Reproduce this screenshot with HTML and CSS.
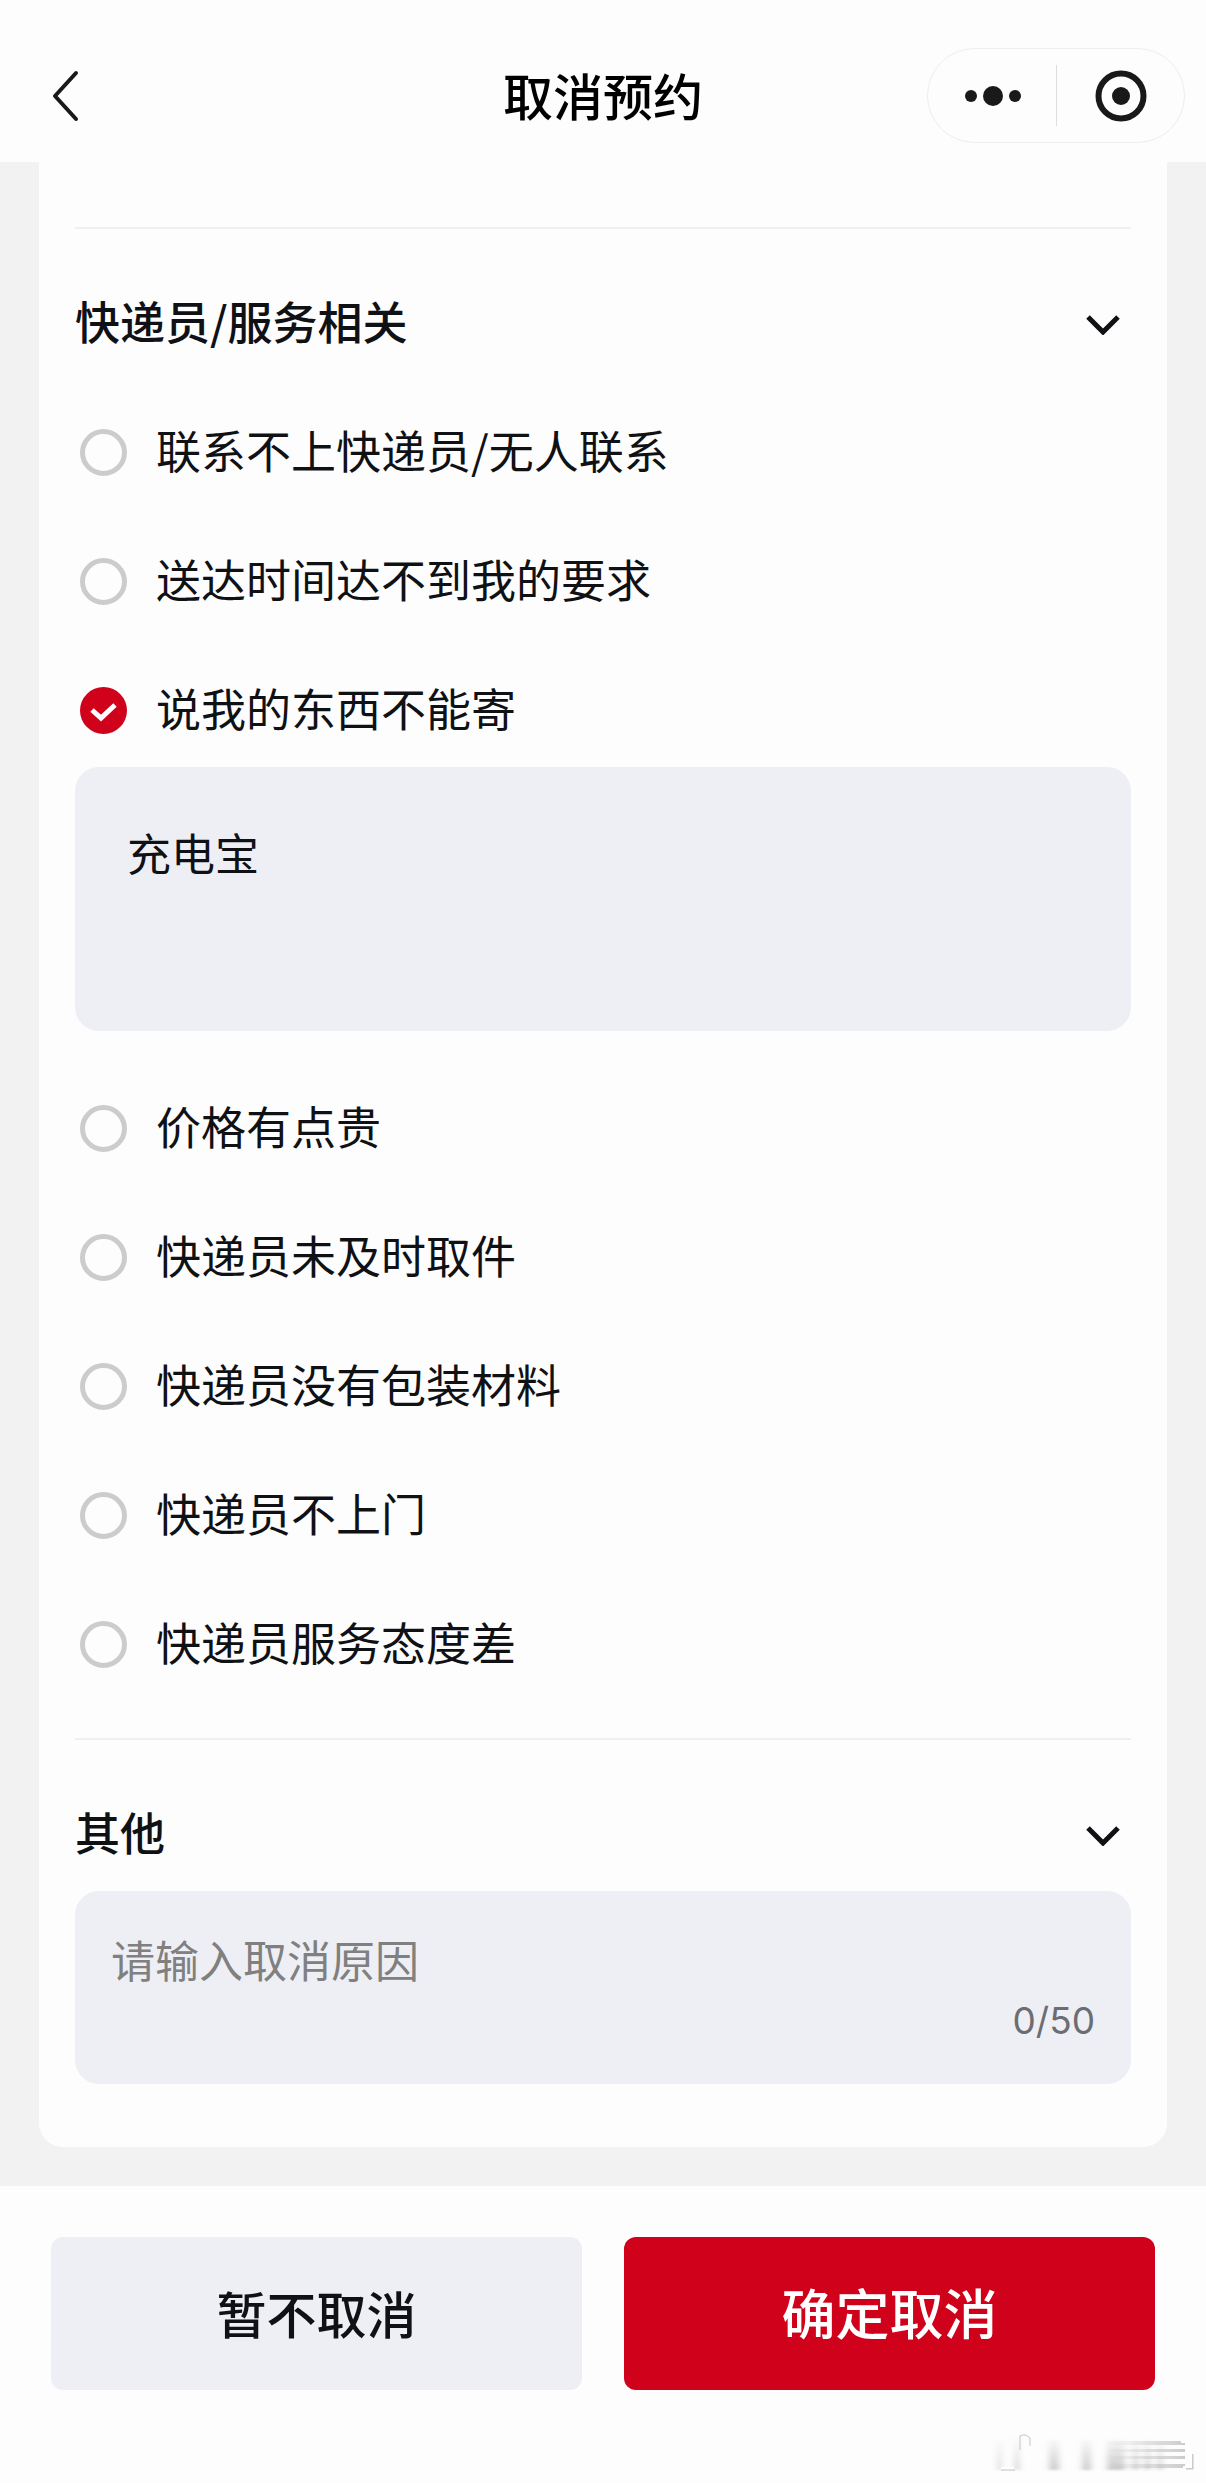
FILE: index.html
```html
<!DOCTYPE html>
<html lang="zh-CN">
<head>
<meta charset="utf-8">
<meta name="viewport" content="width=device-width, initial-scale=1">
<title>取消预约</title>
<link rel="stylesheet" href="styles.css">
</head>
<body>
<header class="navbar">
  <button class="back" type="button" aria-label="返回">
    <svg width="34" height="54" viewBox="0 0 34 54"><path d="M28 4 7 27 28 50" fill="none" stroke="#191919" stroke-width="4" stroke-linecap="round" stroke-linejoin="round"/></svg>
  </button>
  <h1 class="title">取消预约</h1>
  <div class="capsule">
    <button class="capsule-btn" type="button" aria-label="更多">
      <svg width="60" height="24" viewBox="0 0 60 24" fill="#191919"><circle cx="9" cy="12" r="6"/><circle cx="31" cy="12" r="10"/><circle cx="53" cy="12" r="6"/></svg>
    </button>
    <button class="capsule-btn" type="button" aria-label="关闭">
      <svg width="52" height="52" viewBox="0 0 52 52"><circle cx="26" cy="26" r="22.5" fill="none" stroke="#191919" stroke-width="6"/><circle cx="26" cy="26" r="9" fill="#191919"/></svg>
    </button>
  </div>
</header>

<main class="content">
  <form class="card" id="cancel-form">
    <section class="section">
      <h2 class="section-head"><span class="text">快递员/服务相关</span>
        <svg class="chevron" width="36" height="24" viewBox="0 0 36 24"><path d="M3 6 18 21 33 6" fill="none" stroke="#0f1115" stroke-width="5"/></svg>
      </h2>
      <ul class="options">
        <li><label class="option"><input class="radio" type="radio" name="reason"><span class="text">联系不上快递员/无人联系</span></label></li>
        <li><label class="option"><input class="radio" type="radio" name="reason"><span class="text">送达时间达不到我的要求</span></label></li>
        <li>
          <label class="option"><input class="radio" type="radio" name="reason" checked><span class="text">说我的东西不能寄</span></label>
          <textarea class="detail" aria-label="物品说明">充电宝</textarea>
        </li>
        <li><label class="option"><input class="radio" type="radio" name="reason"><span class="text">价格有点贵</span></label></li>
        <li><label class="option"><input class="radio" type="radio" name="reason"><span class="text">快递员未及时取件</span></label></li>
        <li><label class="option"><input class="radio" type="radio" name="reason"><span class="text">快递员没有包装材料</span></label></li>
        <li><label class="option"><input class="radio" type="radio" name="reason"><span class="text">快递员不上门</span></label></li>
        <li><label class="option"><input class="radio" type="radio" name="reason"><span class="text">快递员服务态度差</span></label></li>
      </ul>
    </section>
    <section class="section">
      <h2 class="section-head"><span class="text">其他</span>
        <svg class="chevron" width="36" height="24" viewBox="0 0 36 24"><path d="M3 6 18 21 33 6" fill="none" stroke="#0f1115" stroke-width="5"/></svg>
      </h2>
      <div class="other">
        <textarea class="other-input" rows="1" maxlength="50" placeholder="请输入取消原因" aria-label="其他取消原因"></textarea>
        <span class="count">0/50</span>
      </div>
    </section>
  </form>
</main>

<footer class="actions">
  <button class="btn btn-plain" type="button">暂不取消</button>
  <button class="btn btn-primary" type="submit" form="cancel-form">确定取消</button>
  <svg class="watermark" width="246" height="63" viewBox="0 0 246 63" aria-hidden="true">
    <defs>
      <filter id="soft" x="-10%" y="-20%" width="120%" height="140%"><feGaussianBlur stdDeviation="3 1"/></filter>
      <linearGradient id="fade" x1="0" y1="0" x2="0" y2="1"><stop offset="0" stop-color="#aaa" stop-opacity="0"/><stop offset="1" stop-color="#aaa" stop-opacity=".6"/></linearGradient>
      <linearGradient id="streak" x1="0" y1="0" x2="1" y2="0"><stop offset="0" stop-color="#aaa" stop-opacity="0"/><stop offset="1" stop-color="#999" stop-opacity=".5"/></linearGradient>
    </defs>
    <g fill="url(#fade)" filter="url(#soft)">
      <path d="M38 20h3v30h-3zM55 16h4v34h-4zM89 20h10v30H89zM122 20h9v30h-9zM147 20h18v30h-18zM173 20h5v30h-5zM185 20h5v30h-5zM198 20h4v30h-4z"/>
    </g>
    <path d="M145 21h80v4h-80zM145 29h80v3h-80zM145 36h80v3h-80zM145 44h80v4h-80z" fill="url(#streak)"/>
    <path d="M41 50h14M60 30V16q5-3 10 2v8" fill="none" stroke="#c4c4c4" stroke-width="1"/>
    <path d="M41 48h13" fill="none" stroke="#fff" stroke-width="2"/>
    <path d="M232 34v14h-6" fill="none" stroke="#aaa" stroke-width="3" opacity=".6"/>
    <path d="M221 22h8l-1 12h3v13h-8M221 41h6" fill="none" stroke="#fff" stroke-width="2"/>
  </svg>
</footer>
</body>
</html>
```
FILE: styles.css
```css
* { box-sizing: border-box; }

body {
  margin: 0;
  min-height: 100vh;
  display: flex;
  flex-direction: column;
  background: #f2f2f2;
  color: #0f1115;
  font-family: "Noto Sans CJK SC", sans-serif;
  font-size: 45px;
  line-height: 64px;
}

button, input, textarea { font: inherit; color: inherit; margin: 0; }

button { border: 0; padding: 0; background: none; cursor: pointer; }

svg { display: block; }

.navbar {
  display: grid;
  grid-template-columns: 1fr auto 1fr;
  align-items: center;
  padding: 48px 21px 19px 48px;
  background: #fdfdfd;
}

.back { justify-self: start; }

.title {
  margin: 0;
  padding: 0 27px 4px 0;
  color: #000;
  font-size: 50px;
  font-weight: 500;
}

.capsule {
  justify-self: end;
  display: grid;
  grid-template-columns: 1fr 1fr;
  width: 258px;
  height: 95px;
  padding: 16px 0;
  border: 1px solid #ededed;
  border-radius: 48px;
}

.capsule-btn { display: grid; place-items: center; }
.capsule-btn + .capsule-btn { border-left: 1px solid #dedede; }

.content { flex: 1; padding: 0 39px 38px; }

.card {
  padding: 65px 36px 63px;
  background: #fdfdfd;
  border-radius: 0 0 24px 24px;
}

.section { padding: 62px 0; border-top: 2px solid #f0f0f0; }
.section:last-child { padding-bottom: 0; }

.section-head {
  display: flex;
  justify-content: space-between;
  align-items: center;
  margin: 0;
  padding-right: 10px;
  font-size: 45px;
  font-weight: 500;
}

/* Optical centring of the Chinese text beside the icons */
.text { padding-bottom: 4px; line-height: 60px; }

.options {
  display: grid;
  gap: 65px;
  margin: 65px 0 0;
  padding: 0;
  list-style: none;
}

.option { display: flex; align-items: center; gap: 29px; padding-left: 5px; }

.radio {
  appearance: none;
  width: 47px;
  height: 47px;
  border: 5px solid #ccc;
  border-radius: 50%;
}

.radio:checked {
  border: 0;
  background: #d0021b url("data:image/svg+xml,%3Csvg xmlns='http://www.w3.org/2000/svg' viewBox='0 0 47 47'%3E%3Cpath d='M12 23 21 31 35 18' fill='none' stroke='%23fff' stroke-width='5'/%3E%3C/svg%3E") center / contain no-repeat;
}

.detail {
  display: block;
  width: 100%;
  height: 264px;
  margin-top: 25px;
  padding: 53px 52px;
  border: 0;
  border-radius: 24px;
  background: #eeeff5;
  font-size: 44px;
  resize: none;
}

.other {
  display: flex;
  flex-direction: column;
  margin-top: 25px;
  padding: 36px 36px 33px;
  border-radius: 24px;
  background: #eeeff5;
}

.other-input {
  display: block;
  width: 100%;
  height: 64px;
  padding: 0;
  border: 0;
  background: none;
  font-size: 44px;
  resize: none;
  overflow: hidden;
}

.other-input::placeholder { color: #808080; opacity: 1; }

.count {
  align-self: flex-end;
  color: #6b6d73;
  font-family: Inter, sans-serif;
  font-size: 37px;
  line-height: 60px;
}

.actions {
  position: relative;
  display: grid;
  grid-template-columns: 1fr 1fr;
  gap: 42px;
  padding: 51px 51px 93px;
  background: #fdfdfd;
}

.btn { height: 153px; padding-bottom: 4px; border-radius: 12px; font-weight: 500; }
.btn-plain { background: #eeeff5; font-size: 50px; }
.btn-primary { background: #d0021b; color: #fff; font-size: 54px; }

.watermark { position: absolute; right: 0; bottom: 0; }
```
